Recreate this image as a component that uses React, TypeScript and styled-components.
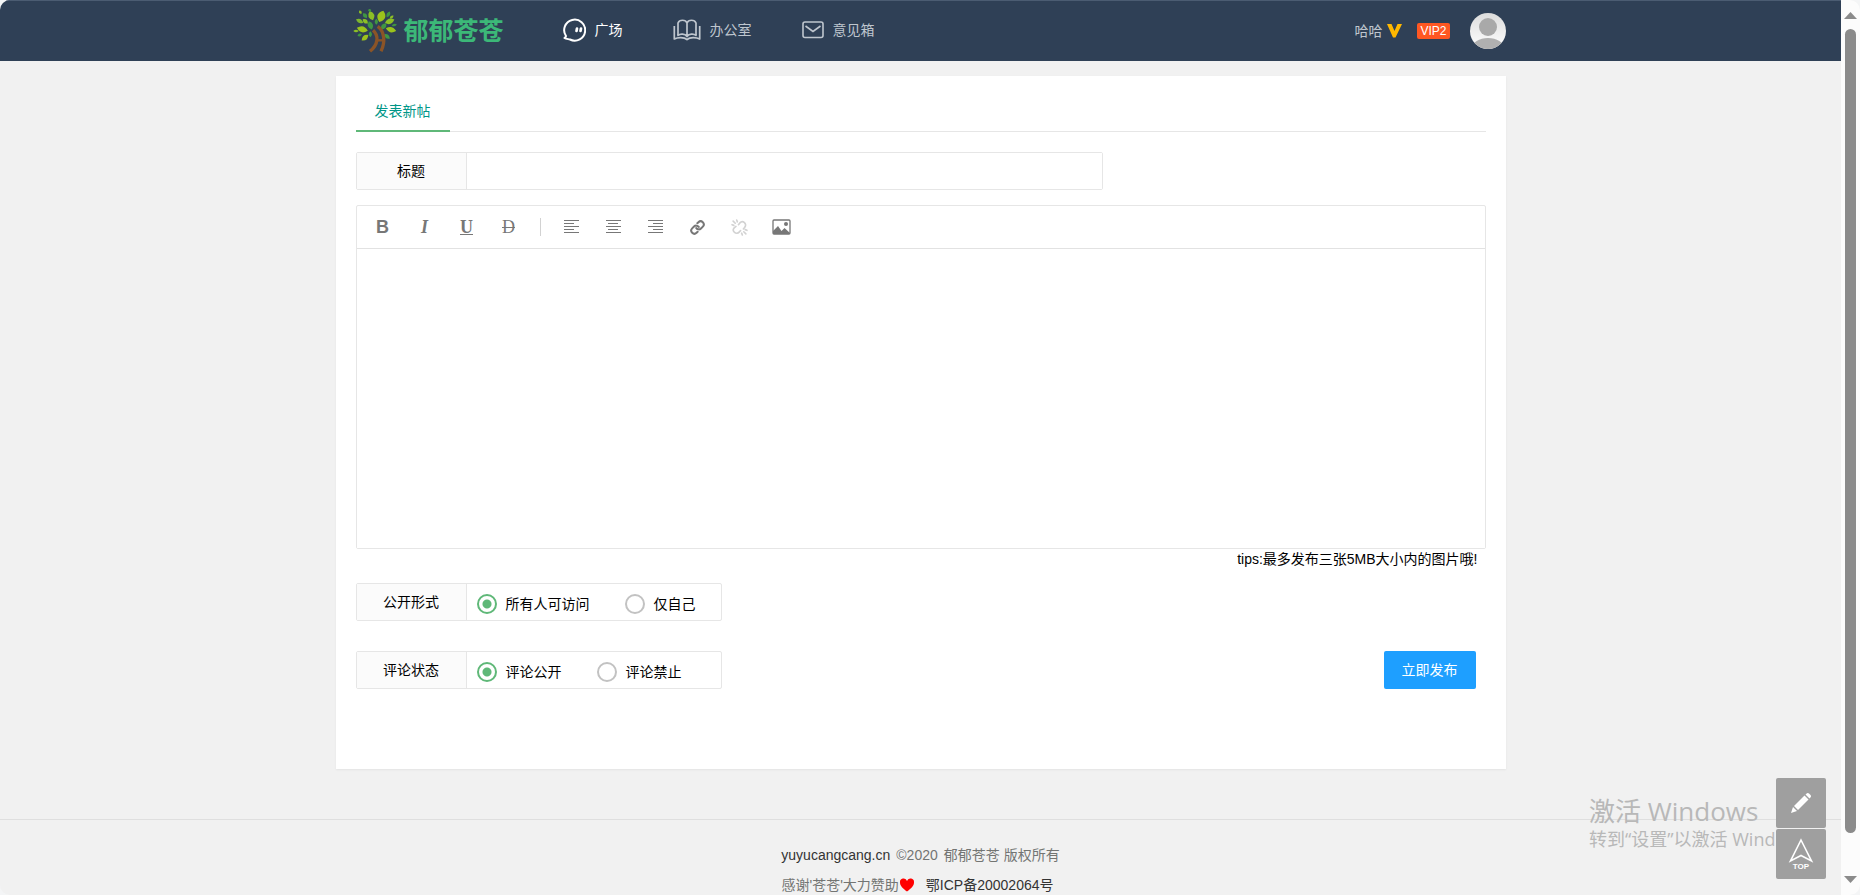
import React from "react";
import styled, { createGlobalStyle } from "styled-components";

const GlobalStyle = createGlobalStyle`
  * { box-sizing: border-box; }
  body {
    margin: 0;
    background: #f4f5f6;
    color: #000;
    font-family: "Liberation Sans", "Noto Sans CJK SC", sans-serif;
    font-size: 14px;
    line-height: 24px;
  }
  a { color: inherit; text-decoration: none; }
  button, input { font: inherit; color: inherit; }
  p { margin: 0; }
`;

const Window = styled.div`
  position: relative;
  display: grid;
  grid-template-columns: minmax(0, 1fr) 19px;
  height: 100vh;
  overflow: hidden;
  border-radius: 10px;
  background: #f1f1f1;
`;

const Page = styled.div`
  min-width: 0;
  overflow: hidden;
`;

const Container = styled.div`
  max-width: 1170px;
  margin: 0 auto;
`;

const Header = styled.header`
  background: #2f4056;
  border-top: 1px solid #4b5c72;
`;

const HeaderInner = styled(Container)`
  display: flex;
  align-items: center;
  height: 60px;
  padding-left: 17px;
`;

const Logo = styled.a`
  display: flex;
  align-items: center;
  gap: 7px;
  width: 209px;
  color: #3cb878;
  font-size: 25px;
  font-weight: 700;
`;

const Nav = styled.nav`
  display: flex;
  align-items: center;
  gap: 50px;
  flex: 1;
  padding-bottom: 2px;
`;

const NavLink = styled.a<{ $active?: boolean }>`
  display: flex;
  align-items: center;
  gap: 9px;
  color: ${(p) => (p.$active ? "#fff" : "#bfc6ce")};
`;

const User = styled.div`
  display: flex;
  align-items: center;
  color: #bfc6ce;
`;

const VMark = styled.svg`
  margin: 0 15px 0 5px;
`;

const VipBadge = styled.span`
  height: 16px;
  padding: 0 3px;
  margin-right: 20px;
  border-radius: 2px;
  background: #ff5722;
  color: #fff;
  font-size: 12px;
  line-height: 16px;
`;

const Card = styled(Container).attrs({ as: "main" })`
  margin-top: 15px;
  padding: 15px 20px 80px;
  background: #fff;
  box-shadow: 0 1px 2px rgba(0, 0, 0, 0.06);
`;

const Tabs = styled.div`
  display: flex;
  height: 41px;
  margin-bottom: 20px;
  border-bottom: 1px solid #e6e6e6;
`;

const Tab = styled.a`
  height: 41px;
  padding: 0 19px;
  border-bottom: 2px solid #5fb878;
  color: #009688;
  line-height: 40px;
`;

const FieldBox = styled.div<{ $width: string }>`
  display: flex;
  width: 100%;
  max-width: ${(p) => p.$width};
  height: 38px;
  border: 1px solid #e6e6e6;
  border-radius: 2px;
`;

const FieldLabel = styled.label`
  flex: none;
  width: 110px;
  border-right: 1px solid #e6e6e6;
  background: #fbfbfb;
  line-height: 36px;
  text-align: center;
`;

const TitleInput = styled.input`
  flex: 1;
  min-width: 0;
  padding: 0 10px;
  border: 0;
  outline: 0;
  background: #fff;
`;

const Editor = styled.section`
  margin-top: 15px;
  border: 1px solid #e6e6e6;
  border-radius: 2px;
`;

const Toolbar = styled.div`
  display: flex;
  align-items: center;
  height: 43px;
  padding-left: 5px;
  border-bottom: 1px solid #e2e2e2;
`;

const Tool = styled.button`
  display: flex;
  align-items: center;
  justify-content: center;
  width: 42px;
  height: 30px;
  padding: 0;
  border: 0;
  background: none;
  color: #777;
  font-size: 18px;
  &:disabled { color: #d2d2d2; }
`;

const Letter = styled.span<{ $serif?: boolean; $italic?: boolean; $line?: string; $light?: boolean }>`
  font-family: ${(p) => (p.$serif ? '"Liberation Serif", serif' : '"Liberation Sans", sans-serif')};
  font-style: ${(p) => (p.$italic ? "italic" : "normal")};
  font-weight: ${(p) => (p.$light ? 400 : 700)};
  text-decoration: ${(p) => p.$line ?? "none"};
`;

const Divider = styled.span`
  width: 1px;
  height: 18px;
  margin: 0 10px;
  background: #d2d2d2;
`;

const Content = styled.textarea`
  display: block;
  width: 100%;
  height: 299px;
  padding: 10px;
  border: 0;
  outline: 0;
  resize: none;
  font: inherit;
`;

const Tips = styled.p`
  height: 34px;
  padding-right: 8px;
  line-height: 20px;
  text-align: right;
`;

const FormRow = styled.div`
  display: flex;
  justify-content: space-between;
  margin-bottom: 30px;
  padding-right: 10px;
  &:last-child { margin-bottom: 0; }
`;

const Options = styled.div`
  display: flex;
  align-items: center;
  gap: 35px;
  padding: 4px 10px 0;
`;

const Option = styled.label`
  display: flex;
  align-items: center;
  gap: 9px;
`;

const Radio = styled.input.attrs({ type: "radio" })`
  appearance: none;
  width: 20px;
  height: 20px;
  margin: 0;
  border: 2px solid #c2c2c2;
  border-radius: 50%;
  &:checked {
    border-color: #5fb878;
    background: radial-gradient(circle, #5fb878 4px, transparent 5px);
  }
`;

const Submit = styled.button`
  width: 92px;
  height: 38px;
  border: 0;
  border-radius: 2px;
  background: #1e9fff;
  color: #fff;
`;

const Footer = styled.footer`
  margin-top: 50px;
  padding: 20px 0 30px;
  border-top: 1px solid #dfdfdf;
  color: #737573;
  line-height: 30px;
  text-align: center;
`;

const FooterLine = styled.p`
  display: flex;
  justify-content: center;
`;

const FooterLink = styled.a`
  padding-right: 6px;
  color: #333;
`;

const Copyright = styled.span`
  padding-right: 6px;
`;

const Thanks = styled.span`
  display: flex;
  align-items: center;
  padding-right: 11px;
`;

const Watermark = styled.aside`
  position: absolute;
  right: 46px;
  bottom: 44px;
  width: 225px;
  color: #b8b8b8;
  font-family: "Open Sans", "Noto Sans CJK SC", sans-serif;
  white-space: nowrap;
`;

const WatermarkTitle = styled.p`
  font-size: 26px;
  line-height: 32px;
`;

const WatermarkText = styled.p`
  font-size: 18px;
  line-height: 24px;
`;

const FixBar = styled.div`
  position: absolute;
  right: 34px;
  bottom: 16px;
  display: grid;
  gap: 1px;
`;

const FixButton = styled.button`
  display: flex;
  align-items: center;
  justify-content: center;
  width: 50px;
  height: 50px;
  padding: 0;
  border: 0;
  border-radius: 2px;
  background: #9f9f9f;
  color: #fff;
`;

const Scrollbar = styled.div`
  display: flex;
  flex-direction: column;
  align-items: center;
  padding: 12px 0;
  background: #fcfcfc;
`;

const Track = styled.div`
  flex: 1;
  padding: 10px 0 43px;
`;

const Thumb = styled.div`
  width: 11px;
  height: 100%;
  border-radius: 6px;
  background: #8b8b8b;
`;

const leaves: [number, number, number, number, number, string][] = [
  [28, 61, 17, 9, 15, "#9bc31c"],
  [85, 22, 18, 12, 110, "#9bc31c"],
  [55, 20, 15, 9, 70, "#8cbf26"],
  [110, 37, 15, 8, -20, "#8cbf26"],
  [36, 86, 13, 7, -40, "#9bc31c"],
  [114, 62, 16, 8, 15, "#9bc31c"],
  [20, 36, 12, 6, 25, "#7db52e"],
  [102, 82, 11, 6, 40, "#3f9642"],
  [52, 49, 13, 8, 70, "#3f9642"],
  [36, 20, 9, 6, 50, "#3f9642"],
  [37, 37, 10, 6, 40, "#8cbf26"],
  [70, 38, 9, 5, 90, "#3f9642"],
  [106, 16, 10, 5, 120, "#3f9642"],
  [92, 52, 12, 7, 130, "#3f9642"],
  [124, 48, 8, 4, -10, "#3f9642"],
  [9, 66, 8, 4, 0, "#8cbf26"],
  [22, 10, 6, 4, 60, "#8cbf26"],
  [116, 24, 7, 4, -40, "#8cbf26"],
  [50, 4, 6, 4, 80, "#3f9642"],
  [52, 76, 9, 5, 90, "#3f9642"],
  [20, 78, 7, 4, -20, "#3f9642"],
];

const TreeIcon = () => (
  <svg width="44" height="44" viewBox="0 0 132 132" aria-hidden="true">
    {leaves.map(([x, y, a, b, r, c], i) => (
      <path key={i} d={`M${-a} 0Q0 ${-b * 2} ${a} 0Q0 ${b * 2} ${-a} 0Z`} fill={c} transform={`translate(${x} ${y}) rotate(${r})`} />
    ))}
    <g fill="none" stroke="#8b5427">
      <path d="M60 64C78 80 76 106 51 127" strokeWidth="10" />
      <path d="M74 52C94 66 98 98 84 127" strokeWidth="10" />
      <path d="M70 94H90" strokeWidth="7" />
    </g>
  </svg>
);

const ChatIcon = () => (
  <svg width="24" height="24" viewBox="0 0 24 24" fill="none" stroke="currentColor" strokeWidth="2" strokeLinecap="round" strokeLinejoin="round" aria-hidden="true">
    <path d="M4 18A10.500 10.500 0 1 1 8 21.500C6 21 4 21 2.500 20C3.500 19.500 4 19 4 18" />
    <path d="M15 10.500L14.500 13M19 10.500L18.500 13" strokeWidth="2.700" />
  </svg>
);

const BookIcon = () => (
  <svg width="28" height="22" viewBox="0 0 28 22" fill="none" stroke="currentColor" strokeWidth="1.700" strokeLinejoin="round" aria-hidden="true">
    <path d="M14 4C12.500 .3 6.500 .3 5 4V16.500C7 14.500 12 14.500 14 17.500C16 14.500 21 14.500 23 16.500V4C21.500 .3 15.500 .3 14 4V17" />
    <path d="M1.300 7V20C5 18 11 18 14 20.500C17 18 23 18 26.700 20V7" />
  </svg>
);

const MailIcon = () => (
  <svg width="22" height="18" viewBox="0 0 22 18" fill="none" stroke="currentColor" strokeWidth="1.600" aria-hidden="true">
    <rect x="1" y="1" width="20" height="15.500" rx="2" />
    <path d="M3.500 5L11 10.500L18.500 5" />
  </svg>
);

const AvatarIcon = () => (
  <svg width="36" height="36" viewBox="0 0 36 36" role="img" aria-label="哈哈">
    <defs>
      <linearGradient id="avatar-bg" x2="0" y2="1">
        <stop stopColor="#dcdcdc" />
        <stop offset="1" stopColor="#fff" />
      </linearGradient>
      <clipPath id="avatar-clip"><circle cx="18" cy="18" r="18" /></clipPath>
    </defs>
    <g clipPath="url(#avatar-clip)">
      <rect width="36" height="36" fill="url(#avatar-bg)" />
      <circle cx="18" cy="14" r="9" fill="#a9a9a9" />
      <ellipse cx="18" cy="35" rx="16" ry="10" fill="#b0b0b0" />
    </g>
  </svg>
);

const AlignIcon = ({ kind }: { kind: "left" | "center" | "right" }) => (
  <svg width="16" height="16" viewBox="0 0 16 16" aria-hidden="true">
    {[15, 10, 15, 10, 15].map((w, i) => {
      const x = kind === "left" ? 0 : kind === "right" ? 15 - w : Math.floor((15 - w) / 2);
      return <rect key={i} x={x} y={1 + i * 3} width={w} height="1" fill="currentColor" />;
    })}
  </svg>
);

const LinkIcon = () => (
  <svg width="15" height="15" viewBox="0 0 24 24" fill="none" stroke="currentColor" strokeWidth="3.200" strokeLinecap="round" aria-hidden="true">
    <path d="M10 13a5 5 0 0 0 7.540.540l3-3a5 5 0 0 0-7.070-7.070l-1.720 1.710" />
    <path d="M14 11a5 5 0 0 0-7.540-.540l-3 3a5 5 0 0 0 7.070 7.070l1.710-1.710" />
  </svg>
);

const UnlinkIcon = () => (
  <svg width="17" height="17" viewBox="0 0 24 24" fill="none" stroke="currentColor" strokeWidth="2.300" strokeLinecap="round" aria-hidden="true">
    <path d="M10.500 8L12.500 5.500A4.500 4.500 0 0 1 19.500 11.500L17.500 14" />
    <path d="M13.500 16.500L11.500 18.500A4.500 4.500 0 0 1 4.500 12.500L7 10.500" />
    <path d="M8 1.500L9 4M3 3L6 6M1.500 8L4 9M16 22.500L15 20M21 21L18 18M22.500 16L20 15" />
  </svg>
);

const ImageIcon = () => (
  <svg width="19" height="16" viewBox="0 0 19 16" aria-hidden="true">
    <rect x="1" y="1" width="17" height="14" rx="1" fill="none" stroke="currentColor" strokeWidth="1.300" />
    <circle cx="14" cy="5" r="2" fill="currentColor" />
    <path d="M1 15V12L6 7L9.500 12L12.500 9L18 14V15Z" fill="currentColor" />
  </svg>
);

const HeartIcon = () => (
  <svg width="16" height="14" viewBox="0 0 16 14" aria-hidden="true">
    <path d="M8 13.500C4 10.500 1 8 1 4.500A3.600 3.600 0 0 1 8 3A3.600 3.600 0 0 1 15 4.500C15 8 12 10.500 8 13.500Z" fill="#f00" />
  </svg>
);

const PencilIcon = () => (
  <svg width="22" height="22" viewBox="0 0 22 22" fill="currentColor" aria-hidden="true">
    <path d="M1 21L3 15L7 19Z" />
    <path d="M4 14L14.500 3.500L18.500 7.500L8 18Z" />
    <path d="M15.500 2.500L17 1.200Q18 .5 19 1.500L20.500 3Q21.500 4 20.800 5L19.500 6.500Z" />
  </svg>
);

const TopIcon = () => (
  <svg width="26" height="32" viewBox="0 0 26 32" aria-hidden="true">
    <path d="M13 2L23.500 23L13 17.500L2.500 23Z" fill="none" stroke="currentColor" strokeWidth="1.600" />
    <text x="13" y="31" textAnchor="middle" fontFamily="Liberation Sans" fontSize="8" fontWeight="700" fill="currentColor">TOP</text>
  </svg>
);

const Arrow = ({ down }: { down?: boolean }) => (
  <svg width="13" height="7" viewBox="0 0 13 7" aria-hidden="true">
    <path d={down ? "M0 0H13L6.500 7Z" : "M0 7H13L6.500 0Z"} fill="#8b8b8b" />
  </svg>
);

const navItems = [
  { label: "广场", icon: <ChatIcon />, active: true },
  { label: "办公室", icon: <BookIcon /> },
  { label: "意见箱", icon: <MailIcon /> },
];

const RadioRow = ({ label, name, options }: { label: string; name: string; options: string[] }) => (
  <FieldBox $width="366px" role="radiogroup" aria-labelledby={`${name}-label`}>
    <FieldLabel as="span" id={`${name}-label`}>{label}</FieldLabel>
    <Options>
      {options.map((o, i) => (
        <Option key={o}>
          <Radio name={name} value={o} defaultChecked={i === 0} />
          {o}
        </Option>
      ))}
    </Options>
  </FieldBox>
);

export default function App() {
  return (
    <>
      <GlobalStyle />
      <Window>
        <Page>
          <Header>
            <HeaderInner>
              <Logo href="#"><TreeIcon />郁郁苍苍</Logo>
              <Nav>
                {navItems.map((n) => (
                  <NavLink key={n.label} href="#" $active={n.active}>{n.icon}{n.label}</NavLink>
                ))}
              </Nav>
              <User>
                <a href="#">哈哈</a>
                <VMark width="15" height="14" viewBox="0 0 15 14" aria-hidden="true">
                  <path d="M0 0H4.500L7.500 7L10.500 0H15L8.500 13.500H6Z" fill="#ffb800" />
                </VMark>
                <VipBadge>VIP2</VipBadge>
                <AvatarIcon />
              </User>
            </HeaderInner>
          </Header>

          <Card>
            <Tabs><Tab href="#">发表新帖</Tab></Tabs>
            <form onSubmit={(e) => e.preventDefault()}>
              <FieldBox $width="747px">
                <FieldLabel htmlFor="title">标题</FieldLabel>
                <TitleInput id="title" type="text" />
              </FieldBox>
              <Editor>
                <Toolbar>
                  <Tool type="button" aria-label="加粗"><Letter>B</Letter></Tool>
                  <Tool type="button" aria-label="斜体"><Letter $serif $italic>I</Letter></Tool>
                  <Tool type="button" aria-label="下划线"><Letter $serif $line="underline">U</Letter></Tool>
                  <Tool type="button" aria-label="删除线"><Letter $serif $light $line="line-through">D</Letter></Tool>
                  <Divider />
                  <Tool type="button" aria-label="左对齐"><AlignIcon kind="left" /></Tool>
                  <Tool type="button" aria-label="居中对齐"><AlignIcon kind="center" /></Tool>
                  <Tool type="button" aria-label="右对齐"><AlignIcon kind="right" /></Tool>
                  <Tool type="button" aria-label="插入链接"><LinkIcon /></Tool>
                  <Tool type="button" aria-label="清除链接" disabled><UnlinkIcon /></Tool>
                  <Tool type="button" aria-label="插入图片"><ImageIcon /></Tool>
                </Toolbar>
                <Content aria-label="内容" />
              </Editor>
              <Tips>tips:最多发布三张5MB大小内的图片哦!</Tips>
              <FormRow>
                <RadioRow label="公开形式" name="visibility" options={["所有人可访问", "仅自己"]} />
              </FormRow>
              <FormRow>
                <RadioRow label="评论状态" name="comments" options={["评论公开", "评论禁止"]} />
                <Submit type="submit">立即发布</Submit>
              </FormRow>
            </form>
          </Card>

          <Footer>
            <FooterLine>
              <FooterLink href="#">yuyucangcang.cn</FooterLink>
              <Copyright>©2020</Copyright>
              <span>郁郁苍苍 版权所有</span>
            </FooterLine>
            <FooterLine>
              <Thanks>感谢'苍苍'大力赞助<HeartIcon /></Thanks>
              <FooterLink href="#">鄂ICP备20002064号</FooterLink>
            </FooterLine>
          </Footer>
        </Page>

        <Scrollbar aria-hidden="true">
          <Arrow />
          <Track><Thumb /></Track>
          <Arrow down />
        </Scrollbar>

        <Watermark>
          <WatermarkTitle>激活 Windows</WatermarkTitle>
          <WatermarkText>转到“设置”以激活 Windows。</WatermarkText>
        </Watermark>
        <FixBar>
          <FixButton type="button" aria-label="发帖"><PencilIcon /></FixButton>
          <FixButton type="button" aria-label="返回顶部"><TopIcon /></FixButton>
        </FixBar>
      </Window>
    </>
  );
}
